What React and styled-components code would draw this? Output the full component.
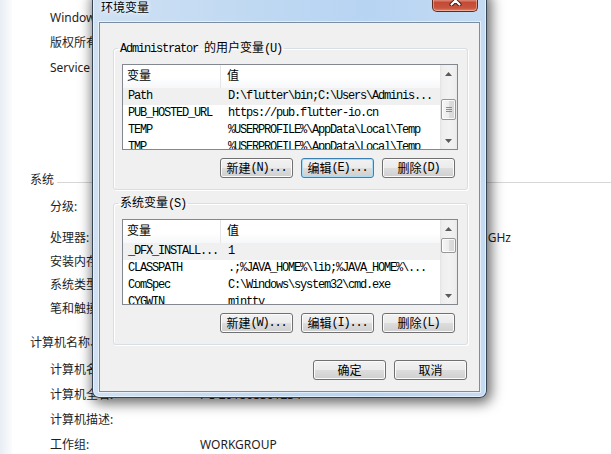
import React from 'react'
import styled, { createGlobalStyle } from 'styled-components'

const cjk = `"Noto Sans CJK SC", sans-serif`
const ui = `"Noto Sans", "Noto Sans CJK SC", sans-serif`
const mono = `"Liberation Mono", monospace`

const GlobalStyle = createGlobalStyle`
  html, body {
    margin: 0;
    padding: 0;
  }
  body {
    width: 611px;
    height: 454px;
    overflow: hidden;
    background: #fff;
  }
`

// ---- background: system properties page ----

const Screen = styled.div`
  position: relative;
  width: 611px;
  height: 454px;
  overflow: hidden;
  background: #fff;
  display: flex;
`

const NavEdge = styled.div`
  width: 12px;
  flex: none;
  background: linear-gradient(to right, #e8edf3, #fbfcfd);
`

const Details = styled.div`
  flex: 1;
  display: flex;
  flex-direction: column;
  font: 12px ${ui};
  color: #1e1e1e;
`

const Row = styled.div`
  display: flex;
  align-items: center;
  height: 24px;
  line-height: 24px;
  margin-top: ${p => p.$gap}px;
  padding-left: ${p => p.$indent - 12}px;
  white-space: nowrap;
`

const Label = styled.span`
  width: 150px;
  flex: none;
`

const Value = styled.span`
  width: ${p => p.$w || 'auto'};
  text-align: ${p => p.$right ? 'right' : 'left'};
`

const Rule = styled.div`
  flex: 1;
  height: 1px;
  margin: 4px 0 0 3px;
  background: #d7d7d7;
`

// ---- dialog window ----

const Dialog = styled.div`
  position: absolute;
  left: 92px;
  top: -9px;
  width: 395px;
  height: 407px;
  box-sizing: border-box;
  border: 1px solid rgba(28, 40, 54, 0.85);
  border-radius: 7px;
  background: linear-gradient(to right, #cfe1f3 0%, #c0d9f2 40%, #b7d4f3 70%, #c4dbf2 100%);
  box-shadow: 2px 3px 13px 2px rgba(0, 0, 0, 0.6), inset 0 0 0 1px rgba(255, 255, 255, 0.55);
  display: flex;
  flex-direction: column;
`

const TitleBar = styled.div`
  height: 30px;
  flex: none;
  display: flex;
  justify-content: space-between;
  align-items: flex-start;
  padding-left: 8px;
`

const Title = styled.div`
  padding-top: 7px;
  font: 12px/16px ${cjk};
  color: #000;
  text-shadow: 0 0 6px #fff, 0 0 3px #fff;
`

const CloseButton = styled.div`
  width: 46px;
  height: 20px;
  margin-right: 8px;
  box-sizing: border-box;
  border: 1px solid #5e2a22;
  border-top: none;
  border-radius: 0 0 5px 5px;
  background: linear-gradient(#e7a497 0%, #d87c6b 45%, #c44a36 55%, #c9563f 85%, #e08b6f 100%);
  box-shadow: inset 0 0 0 1px rgba(255, 220, 210, 0.45);
  display: flex;
  align-items: center;
  justify-content: center;
  padding-bottom: 2px;
`

const Client = styled.div`
  flex: 1;
  margin: 0 6px 5px;
  box-sizing: border-box;
  border: 1px solid #7b8da1;
  box-shadow: 0 0 0 1px rgba(255, 255, 255, 0.55);
  background: #f0f0f0;
  display: flex;
  flex-direction: column;
  padding: 17px 11px 11px 13px;
`

const Group = styled.fieldset`
  margin: ${p => p.$gap || 0}px 0 0;
  padding: 8px 9px 11px 8px;
  border: 1px solid #d5dfe5;
  border-radius: 3px;
  box-shadow: inset 1px 1px 0 #fff, 1px 1px 0 #fff;
  min-width: 0;
`

const Legend = styled.legend`
  margin-left: -4px;
  padding: 0 2px;
  font: 12px/14px ${cjk};
  color: #000;
`

const Mono = styled.span`
  font-family: ${mono};
  font-size: 12px;
  letter-spacing: -1.2px;
`

const List = styled.div`
  height: 86px;
  box-sizing: border-box;
  border: 1px solid #828790;
  background: #fff;
  display: flex;
  overflow: hidden;
`

const ListBody = styled.div`
  flex: 1;
  min-width: 0;
  display: flex;
  flex-direction: column;
`

const Header = styled.div`
  height: 23px;
  flex: none;
  display: flex;
  background: linear-gradient(#fff 0%, #fff 55%, #f6f7f9 100%);
`

const HeadCell = styled.div`
  width: ${p => p.$w ? `${p.$w}px` : 'auto'};
  flex: ${p => p.$w ? 'none' : 1};
  box-sizing: border-box;
  padding-left: ${p => p.$pad}px;
  border-right: ${p => p.$w ? '1px solid #e3e5e8' : 'none'};
  font: 12px/20px ${cjk};
  color: #000;
`

const ItemRow = styled.div`
  height: 17px;
  flex: none;
  display: flex;
  background: ${p => p.$selected ? '#f0f0f0' : 'transparent'};
  font-family: ${mono};
  font-size: 12px;
  letter-spacing: -1.2px;
  line-height: 17px;
  color: #000;
  white-space: nowrap;
`

const Cell = styled.div`
  width: ${p => p.$w ? `${p.$w}px` : 'auto'};
  flex: ${p => p.$w ? 'none' : 1};
  box-sizing: border-box;
  padding-left: ${p => p.$pad}px;
  overflow: hidden;
`

const ScrollBar = styled.div`
  width: 17px;
  flex: none;
  display: flex;
  flex-direction: column;
  background: linear-gradient(to right, #e3e3e3 0, #eeeeee 2px, #f2f2f2 50%, #eeeeee 15px, #e6e6e6 100%);
`

const ScrollArrow = styled.div`
  height: 17px;
  flex: none;
  display: flex;
  align-items: center;
  justify-content: center;
`

const Track = styled.div`
  flex: 1;
  display: flex;
  flex-direction: column;
  align-items: center;
`

const Thumb = styled.div`
  width: 15px;
  height: ${p => p.$h}px;
  margin-top: ${p => p.$top}px;
  box-sizing: border-box;
  border: 1px solid #979797;
  border-radius: 2px;
  background: linear-gradient(to right, #f5f5f5 0%, #ededed 50%, #dedede 51%, #d6d6d6 100%);
  box-shadow: inset 0 0 0 1px rgba(255, 255, 255, 0.8);
  display: flex;
  align-items: center;
  justify-content: center;
`

const ButtonRow = styled.div`
  display: flex;
  justify-content: flex-end;
  gap: 8px;
  margin-top: ${p => p.$gap || 0}px;
  padding-right: ${p => p.$pad || 0}px;
`

const Button = styled.div`
  width: 73px;
  height: 20px;
  box-sizing: border-box;
  border: 1px solid ${p => p.$focused ? '#3c7fb1' : '#707070'};
  border-radius: 3px;
  background: linear-gradient(#f2f2f2 0%, #ebebeb 50%, #dddddd 51%, #cfcfcf 100%);
  box-shadow: inset 0 0 0 1px ${p => p.$focused ? '#a9dcf5' : '#fbfbfb'};
  display: flex;
  align-items: center;
  justify-content: center;
  font: 12px/18px ${cjk};
  color: #000;
  white-space: nowrap;
`

const OkRow = styled(ButtonRow)`
  margin-top: auto;
  padding-right: 1px;
`

const CloseGlyph = () => (
  <svg width="13" height="11" viewBox="0 0 13 11">
    <path d="M2.5 1.5 L10.5 9.5 M10.5 1.5 L2.5 9.5" stroke="#3b1a14" strokeWidth="4" strokeLinecap="round" />
    <path d="M2.5 1.5 L10.5 9.5 M10.5 1.5 L2.5 9.5" stroke="#fff" strokeWidth="2.2" strokeLinecap="round" />
  </svg>
)

const Arrow = ({ down }) => (
  <svg width="7" height="4" viewBox="0 0 7 4">
    <polygon points={down ? '0,0 7,0 3.5,4' : '0,4 7,4 3.5,0'} fill="#5a5a5a" />
  </svg>
)

const Grip = () => (
  <svg width="6" height="5" viewBox="0 0 6 5">
    <path d="M0 0.5 H6 M0 2.5 H6 M0 4.5 H6" stroke="#8c8c8c" strokeWidth="1" />
  </svg>
)

const VarList = ({ rows, thumbTop, thumbHeight }) => (
  <List>
    <ListBody>
      <Header>
        <HeadCell $w={98} $pad={4}>变量</HeadCell>
        <HeadCell $pad={6}>值</HeadCell>
      </Header>
      {rows.map((r, i) => (
        <ItemRow key={r[0]} $selected={i === 0}>
          <Cell $w={98} $pad={5}>{r[0]}</Cell>
          <Cell $pad={7}>{r[1]}</Cell>
        </ItemRow>
      ))}
    </ListBody>
    <ScrollBar>
      <ScrollArrow><Arrow /></ScrollArrow>
      <Track>
        <Thumb $top={thumbTop} $h={thumbHeight}>{thumbHeight > 18 && <Grip />}</Thumb>
      </Track>
      <ScrollArrow><Arrow down /></ScrollArrow>
    </ScrollBar>
  </List>
)

const userVars = [
  ['Path', 'D:\\flutter\\bin;C:\\Users\\Adminis...'],
  ['PUB_HOSTED_URL', 'https://pub.flutter-io.cn'],
  ['TEMP', '%USERPROFILE%\\AppData\\Local\\Temp'],
  ['TMP', '%USERPROFILE%\\AppData\\Local\\Temp'],
]

const systemVars = [
  ['_DFX_INSTALL...', '1'],
  ['CLASSPATH', '.;%JAVA_HOME%\\lib;%JAVA_HOME%\\...'],
  ['ComSpec', 'C:\\Windows\\system32\\cmd.exe'],
  ['CYGWIN', 'mintty'],
]

const App = () => (
  <Screen>
    <GlobalStyle />
    <NavEdge />
    <Details>
      <Row $indent={50} $gap={6}>Windows 7 旗舰版</Row>
      <Row $indent={50} $gap={1}>版权所有 © 2009 Microsoft Corporation。保留所有权利。</Row>
      <Row $indent={50} $gap={1}>Service Pack 1</Row>
      <Row $indent={30} $gap={88}>系统<Rule /></Row>
      <Row $indent={50} $gap={3}><Label>分级:</Label><Value>系统分级不可用</Value></Row>
      <Row $indent={50} $gap={7}><Label>处理器:</Label><Value $w="311px" $right>3.20 GHz</Value></Row>
      <Row $indent={50} $gap={0}><Label>安装内存(RAM):</Label><Value>8.00 GB</Value></Row>
      <Row $indent={50} $gap={-1}><Label>系统类型:</Label><Value>64 位操作系统</Value></Row>
      <Row $indent={50} $gap={0}><Label>笔和触摸:</Label><Value>没有可用于此显示器的笔或触控输入</Value></Row>
      <Row $indent={30} $gap={10}>计算机名称、域和工作组设置</Row>
      <Row $indent={50} $gap={3}><Label>计算机名:</Label><Value>PC-201808301234</Value></Row>
      <Row $indent={50} $gap={1}><Label>计算机全名:</Label><Value>PC-201808301234</Value></Row>
      <Row $indent={50} $gap={1}><Label>计算机描述:</Label></Row>
      <Row $indent={50} $gap={1}><Label>工作组:</Label><Value>WORKGROUP</Value></Row>
    </Details>

    <Dialog>
      <TitleBar>
        <Title>环境变量</Title>
        <CloseButton><CloseGlyph /></CloseButton>
      </TitleBar>
      <Client>
        <Group>
          <Legend><Mono>Administrator </Mono>的用户变量<Mono>(U)</Mono></Legend>
          <VarList rows={userVars} thumbTop={17} thumbHeight={21} />
          <ButtonRow $gap={8} $pad={3}>
            <Button>新建<Mono>(N)...</Mono></Button>
            <Button $focused>编辑<Mono>(E)...</Mono></Button>
            <Button>删除<Mono>(D)</Mono></Button>
          </ButtonRow>
        </Group>
        <Group $gap={5}>
          <Legend>系统变量<Mono>(S)</Mono></Legend>
          <VarList rows={systemVars} thumbTop={1} thumbHeight={15} />
          <ButtonRow $gap={8} $pad={3}>
            <Button>新建<Mono>(W)...</Mono></Button>
            <Button>编辑<Mono>(I)...</Mono></Button>
            <Button>删除<Mono>(L)</Mono></Button>
          </ButtonRow>
        </Group>
        <OkRow>
          <Button>确定</Button>
          <Button>取消</Button>
        </OkRow>
      </Client>
    </Dialog>
  </Screen>
)

export default App
